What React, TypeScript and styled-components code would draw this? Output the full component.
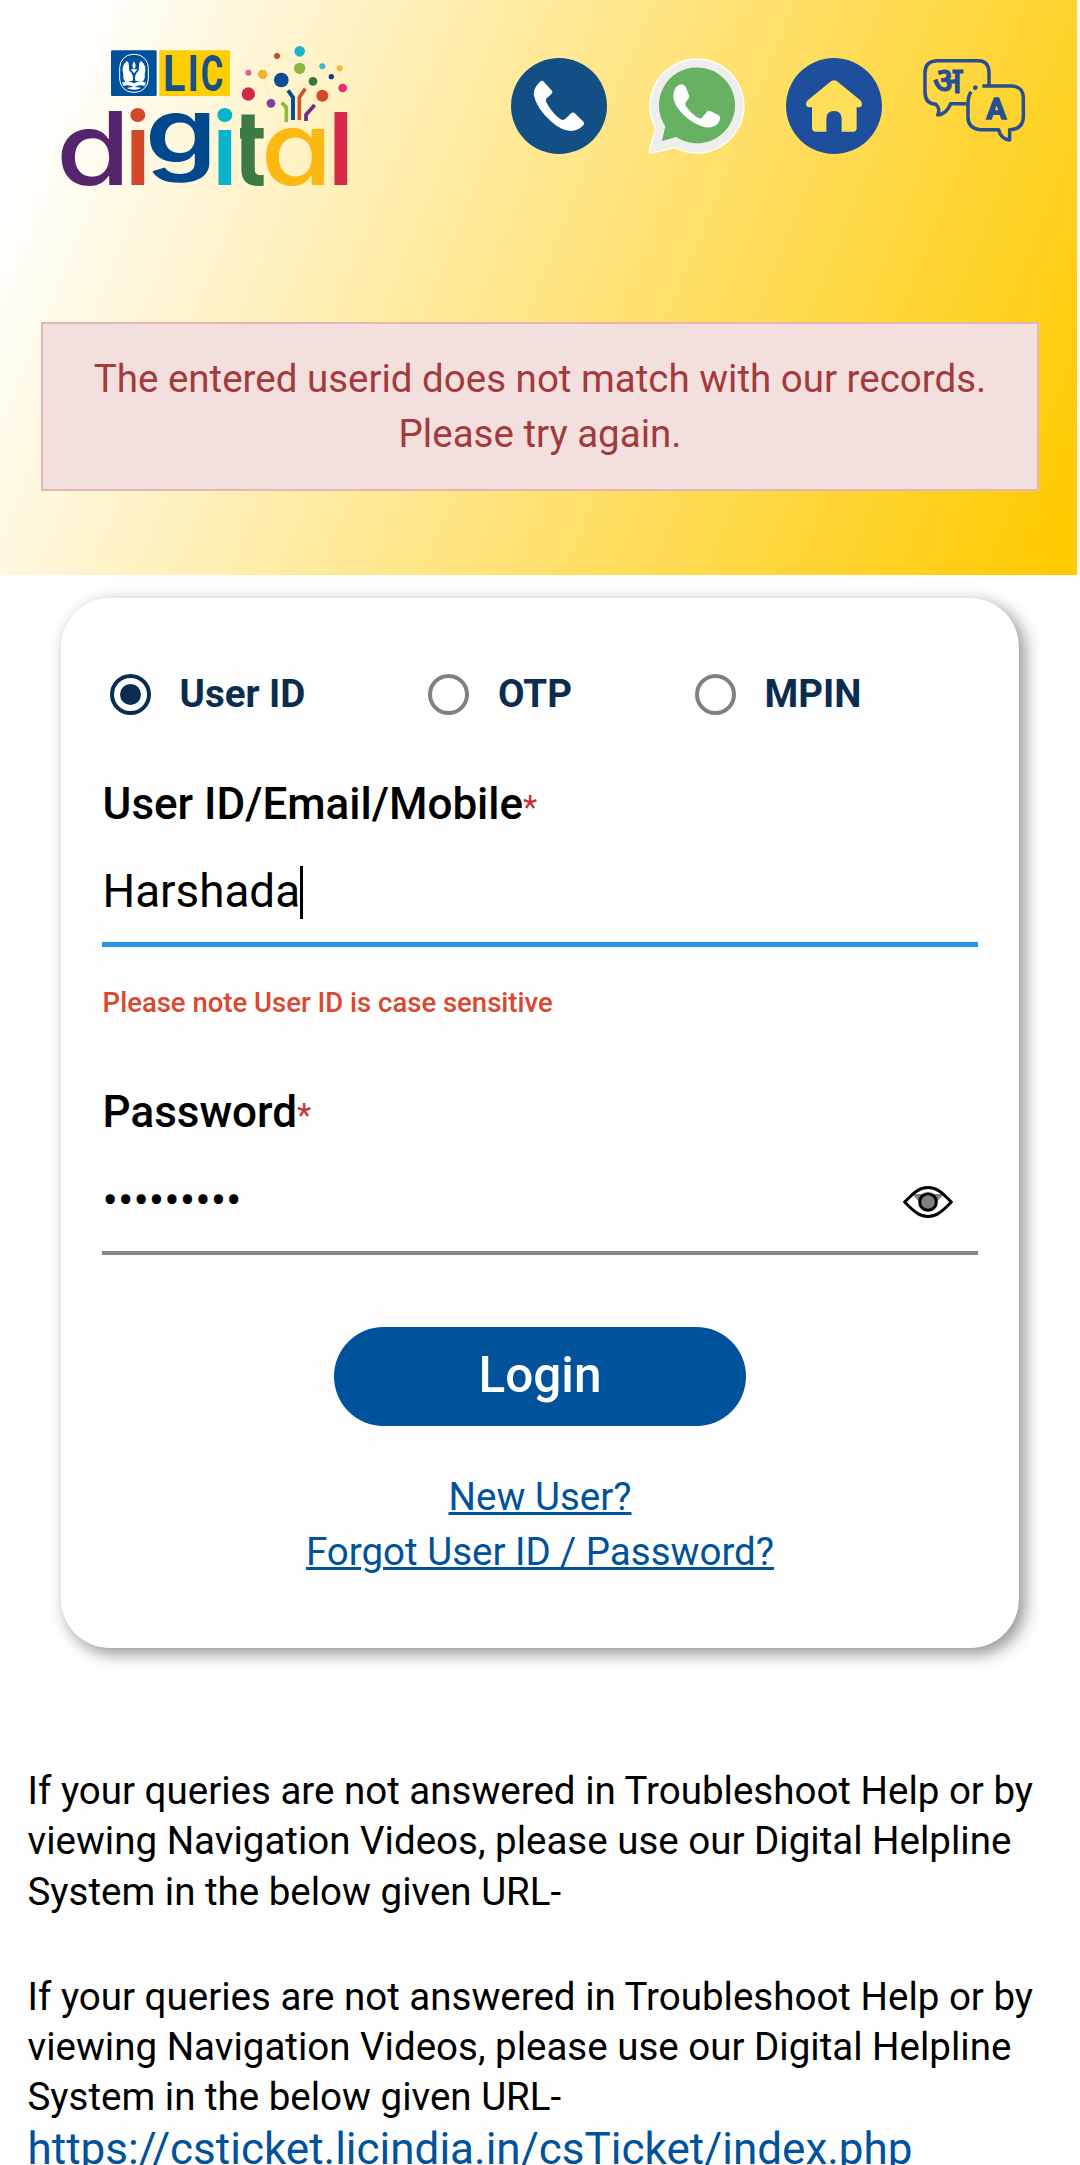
import React from "react";
import styled, { createGlobalStyle } from "styled-components";

const GlobalStyle = createGlobalStyle`
  html, body { margin: 0; padding: 0; background: #fefefe; }
  * { box-sizing: border-box; }
  body { font-family: Roboto, "Liberation Sans", sans-serif; color: #000; }
`;

const Page = styled.div`
  width: 1080px;
  height: 2165px;
  overflow: hidden;
`;

const Header = styled.header`
  width: 1077px;
  height: 575px;
  background: linear-gradient(112deg, #fffefd 7%, #ffca00 98%);
`;

const TopBar = styled.div`
  display: flex;
  align-items: flex-start;
  justify-content: space-between;
  padding: 30px 50px 0 40px;
  height: 322px;
`;

const IconBar = styled.nav`
  display: flex;
  align-items: flex-start;
  gap: 41px;
  padding-top: 28px;
`;

const Alert = styled.div`
  width: 998px;
  height: 169px;
  margin-left: 41px;
  padding: 27px 40px 0;
  border: 2px solid #e4b6b4;
  background: #f4dfdf;
  color: #a33a3c;
  font-size: 38.5px;
  line-height: 55px;
  text-align: center;
`;

const Card = styled.main`
  display: flex;
  flex-direction: column;
  width: 958px;
  height: 1050px;
  margin: 23px 0 0 61px;
  padding: 76px 41px 0;
  border-radius: 49px;
  background: #fefefe;
  box-shadow: 5.5px 5.5px 16px rgba(0, 0, 0, 0.41);
`;

const Modes = styled.div`
  display: grid;
  grid-template-columns: 318.5px 266.5px auto;
  padding-left: 7.5px;
  height: 41px;
`;

const Mode = styled.label`
  display: flex;
  align-items: center;
  gap: 29px;
  height: 41px;
  color: #0a2d4f;
  font-size: 38.5px;
  line-height: 39px;
  font-weight: 700;
`;

const ModeName = styled.span`
  height: 41px;
`;

const Radio = styled.span<{ $on?: boolean }>`
  display: flex;
  align-items: center;
  justify-content: center;
  width: 41px;
  height: 41px;
  border-radius: 50%;
  border: 4px solid ${(p) => (p.$on ? "#0a2d4f" : "#808080")};
  &::after {
    content: "";
    width: 21px;
    height: 21px;
    border-radius: 50%;
    background: ${(p) => (p.$on ? "#0a2d4f" : "transparent")};
  }
`;

const Label = styled.div<{ $top: number }>`
  margin-top: ${(p) => p.$top}px;
  height: 52px;
  padding-left: 0.6px;
  font-size: 44px;
  line-height: 52px;
  font-weight: 500;
  white-space: nowrap;
`;

const Star = styled.span`
  color: #c4343a;
  font-size: 33px;
  font-weight: 400;
`;

const Field = styled.div<{ $line: string; $weight: number; $top: number }>`
  display: flex;
  align-items: center;
  height: ${(p) => 78 + p.$top + p.$weight}px;
  padding: ${(p) => p.$top}px 25px 24px 0.5px;
  border-bottom: ${(p) => p.$weight}px solid ${(p) => p.$line};
  font-size: 45.8px;
  line-height: 55px;
`;

const Caret = styled.span`
  width: 3px;
  height: 53px;
  margin-top: 2px;
  background: #000;
`;

const Spacer = styled.span`
  flex: 1;
`;

const Note = styled.div`
  margin-top: 39px;
  padding-left: 0.6px;
  height: 33px;
  color: #d9482f;
  font-size: 27.5px;
  line-height: 33px;
  font-weight: 500;
`;

const LoginButton = styled.button`
  align-self: center;
  width: 412px;
  height: 99px;
  margin-top: 72px;
  padding: 0 0 4px;
  border: 0;
  border-radius: 50px;
  background: #00529b;
  color: #fff;
  font-family: inherit;
  font-size: 49.5px;
  font-weight: 500;
`;

const Links = styled.div`
  display: flex;
  flex-direction: column;
  align-items: center;
  margin-top: 43px;
`;

const Link = styled.a`
  color: #00529b;
  font-size: 38.5px;
  line-height: 55px;
  text-decoration: underline;
  text-decoration-thickness: 3px;
`;

const Help = styled.section`
  display: flex;
  flex-direction: column;
  padding: 118px 0 0 27.5px;
`;

const HelpText = styled.p`
  margin: 0 0 55px;
  font-size: 38.5px;
  line-height: 50.3px;
  white-space: nowrap;
  &:last-of-type {
    margin-bottom: 0;
  }
`;

const HelpLink = styled.a`
  color: #00529b;
  font-size: 44px;
  line-height: 53px;
  white-space: nowrap;
`;

const DOTS: [number, number, number, string][] = [
  [711, 78, 9, "#c94a2b"],
  [779, 64, 16, "#1ab5c8"],
  [779, 115, 17, "#8cb53f"],
  [847, 109, 9, "#3eb3cb"],
  [899, 115, 9, "#f3b92f"],
  [625, 128, 9, "#d9628f"],
  [668, 133, 14, "#f0b32b"],
  [724, 150, 22, "#0b4c93"],
  [819, 154, 13, "#35793f"],
  [874, 140, 8, "#0b3f86"],
  [908, 174, 13, "#e72c6b"],
  [847, 197, 18, "#d4482a"],
  [625, 192, 20, "#d12a48"],
  [693, 220, 13, "#7c3f98"],
];

type GlyphProps = {
  x: number;
  y: number;
  size: number;
  sx?: number;
  weight?: number;
  fill: string;
  font?: string;
  clip?: string;
  children: string;
};

const Glyph = ({ x, y, size, sx = 1, weight = 600, fill, font = "Inter", clip, children }: GlyphProps) => (
  <g clipPath={clip}>
    <text
      transform={`translate(${x} ${y}) scale(${sx} 1)`}
      fontFamily={`${font}, sans-serif`}
      fontSize={size}
      fontWeight={weight}
      fill={fill}
      style={{ fontFeatureSettings: '"cv11"' }}
    >
      {children}
    </text>
  </g>
);

const Logo = () => (
  <svg width="330" height="180" viewBox="0 0 990 540">
    <defs>
      <clipPath id="tClip">
        <rect x="600" y="200" width="71" height="300" />
      </clipPath>
    </defs>
    <rect x="213" y="61" width="137" height="137" rx="4" fill="#00509a" />
    <rect x="358" y="61" width="212" height="137" rx="4" fill="#ffce00" />
    <rect x="239" y="73" width="86" height="114" rx="40" fill="none" stroke="#fff" strokeWidth="3" />
    <g fill="#fff">
      <path d="M254 100Q262 88 266 100L268 122Q282 132 278 152L258 156Q247 148 250 132Q244 114 254 100Z" />
      <path d="M310 100Q302 88 298 100L296 122Q282 132 286 152L306 156Q317 148 314 132Q320 114 310 100Z" />
      <path d="M282 94Q291 108 282 118Q273 108 282 94Z" />
      <path d="M272 118H292L282 130Z" />
      <path d="M246 158Q264 150 282 160Q300 150 318 158L314 168Q298 162 282 172Q266 162 250 168Z" />
      <path d="M260 174Q282 168 304 174Q282 184 260 174Z" />
    </g>
    <Glyph x={369} y={184} size={148} sx={0.84} weight={700} fill="#174f86" font="Roboto">L</Glyph>
    <Glyph x={443} y={184} size={148} sx={0.76} weight={700} fill="#174f86" font="Roboto">I</Glyph>
    <Glyph x={482} y={184} size={148} sx={0.7} weight={700} fill="#174f86" font="Roboto">C</Glyph>

    <g stroke="#c9c2a8" strokeWidth="1" opacity="0.5" fill="none">
      <path d="M625 128L668 133L711 78L779 64M711 78L847 109L874 140M779 115L724 150M668 133L693 220M899 115L908 174" />
    </g>
    {DOTS.map(([cx, cy, r, c]) => (
      <circle key={`${cx}-${cy}`} cx={cx} cy={cy} r={r} fill={c} />
    ))}
    <g fill="none" strokeWidth="11">
      <path d="M725 218L739 232V277" stroke="#93b83e" />
      <path d="M744 181L759 202V270" stroke="#0b4c93" strokeWidth="12" />
      <path d="M796 176L778 202V270" stroke="#d4532a" />
      <path d="M824 225L798 254V273" stroke="#6b2c85" />
    </g>

    <Glyph x={48} y={465} size={304} sx={1.19} weight={500} fill="#55246c">d</Glyph>
    <Glyph x={254} y={465} size={300} weight={600} fill="#d4482a">i</Glyph>
    <Glyph x={315} y={400} size={272} sx={1.27} weight={600} fill="#00498f">g</Glyph>
    <Glyph x={515} y={465} size={300} weight={600} fill="#06b3c9">i</Glyph>
    <Glyph x={577} y={465} size={315} fill="#3d7b42" clip="url(#tClip)">t</Glyph>
    <Glyph x={662} y={465} size={310} sx={1.12} weight={500} fill="#fdb913">a</Glyph>
    <Glyph x={863} y={465} size={300} weight={600} fill="#d62a48">l</Glyph>
  </svg>
);

const PhoneIcon = () => (
  <svg width="96" height="96" viewBox="63 54 288 288">
    <circle cx="207" cy="198" r="144" fill="#114f84" />
    <path
      fill="#fff"
      d="M150 125Q156 119 162 126L186 152Q189 157 185 161L170 175Q166 180 169 187Q186 220 212 238Q219 242 226 236L244 219Q250 215 256 221L281 246Q285 251 280 256Q264 273 243 273Q215 272 185 246Q138 205 131 163Q130 145 150 125Z"
    />
  </svg>
);

const WhatsAppIcon = () => (
  <svg width="97" height="96" viewBox="473 54 292 288">
    <path
      d="M620 57A141 141 0 1 1 555 323L484 339Q476 340 478 332L496 265A141 141 0 0 1 620 57Z"
      fill="#eeeeee"
      stroke="#fdfdf6"
      strokeWidth="5"
    />
    <path d="M620 82A114 114 0 1 1 558 291L515 303L525 259A114 114 0 0 1 620 82Z" fill="#66b162" />
    <path
      fill="#fff"
      d="M556 143Q566 131 578 133Q586 136 590 149L597 168Q598 173 593 178L587 187Q583 192 587 198Q604 223 625 234Q632 238 637 232L649 217Q653 211 660 213L685 225Q691 228 690 236Q688 254 670 260Q655 266 634 259Q590 243 563 205Q550 187 549 168Q549 153 556 143Z"
    />
  </svg>
);

const HomeIcon = () => (
  <svg width="96" height="96" viewBox="48 54 288 288">
    <circle cx="192" cy="198" r="144" fill="#1e4f9c" />
    <path
      fill="#ffdf5a"
      d="M183 124Q192 117 201 124L270 180Q277 186 276 194Q274 202 264 202H260V264Q260 275 249 275H215V236Q215 213 192 213Q169 213 169 236V275H137Q126 275 126 264V202H120Q108 202 108 192Q107 187 114 180Z"
    />
  </svg>
);

const LanguageIcon = () => (
  <svg width="104" height="85.33" viewBox="459 51 312 256">
    <g fill="none" stroke="#274f93" strokeWidth="10.5" strokeLinejoin="round">
      <path d="M657 133V92Q655 59 625 59H500Q465 61 465 95V155Q466 188 498 190Q512 205 503 222Q530 220 542 188H590" />
      <path d="M637 135H725Q760 137 760 170V230Q758 265 719 266V297Q692 294 686 266H630Q595 262 594 230V190Q594 165 603 152" />
    </g>
    <circle cx="616" cy="140" r="7" fill="#274f93" />
    <text
      x="488"
      y="157"
      fontFamily='"Noto Sans Devanagari", "Noto Sans", sans-serif'
      fontSize="112"
      fontWeight="500"
      fill="#274f93"
      stroke="#274f93"
      strokeWidth="3"
    >
      अ
    </text>
    <text
      x="649"
      y="233"
      fontFamily="Roboto, sans-serif"
      fontSize="90"
      fontWeight="700"
      fill="#274f93"
      stroke="#274f93"
      strokeWidth="4"
    >
      A
    </text>
  </svg>
);

const EyeSvg = styled.svg`
  margin-top: 3px;
`;

const EyeIcon = () => (
  <EyeSvg width="50" height="32" viewBox="0 3 150 96">
    <path d="M28 27H122L104 48H46Z" fill="#808080" />
    <path d="M5 51C34 21 50 7.500 75 7.500S116 21 145 51C116 81 100 94.500 75 94.500S34 81 5 51Z" fill="none" stroke="#000" strokeWidth="9" strokeLinejoin="round" />
    <circle cx="75" cy="51" r="25" fill="#808080" stroke="#000" strokeWidth="9" />
  </EyeSvg>
);

export default function App() {
  return (
    <Page>
      <GlobalStyle />
      <Header>
        <TopBar>
          <Logo />
          <IconBar>
            <PhoneIcon />
            <WhatsAppIcon />
            <HomeIcon />
            <LanguageIcon />
          </IconBar>
        </TopBar>
        <Alert>
          The entered userid does not match with our records.
          <br />
          Please try again.
        </Alert>
      </Header>
      <Card>
        <Modes>
          <Mode><Radio $on /><ModeName>User ID</ModeName></Mode>
          <Mode><Radio /><ModeName>OTP</ModeName></Mode>
          <Mode><Radio /><ModeName>MPIN</ModeName></Mode>
        </Modes>
        <Label $top={63}>User ID/Email/Mobile<Star>*</Star></Label>
        <Field $line="#2595eb" $weight={5} $top={34}>
          <span>Harshada</span>
          <Caret />
        </Field>
        <Note>Please note User ID is case sensitive</Note>
        <Label $top={67}>Password<Star>*</Star></Label>
        <Field $line="#888888" $weight={4} $top={35}>
          <span>•••••••••</span>
          <Spacer />
          <EyeIcon />
        </Field>
        <LoginButton>Login</LoginButton>
        <Links>
          <Link>New User?</Link>
          <Link>Forgot User ID / Password?</Link>
        </Links>
      </Card>
      <Help>
        <HelpText>
          If your queries are not answered in Troubleshoot Help or by
          <br />
          viewing Navigation Videos, please use our Digital Helpline
          <br />
          System in the below given URL-
        </HelpText>
        <HelpText>
          If your queries are not answered in Troubleshoot Help or by
          <br />
          viewing Navigation Videos, please use our Digital Helpline
          <br />
          System in the below given URL-
        </HelpText>
        <HelpLink>https://csticket.licindia.in/csTicket/index.php</HelpLink>
      </Help>
    </Page>
  );
}
